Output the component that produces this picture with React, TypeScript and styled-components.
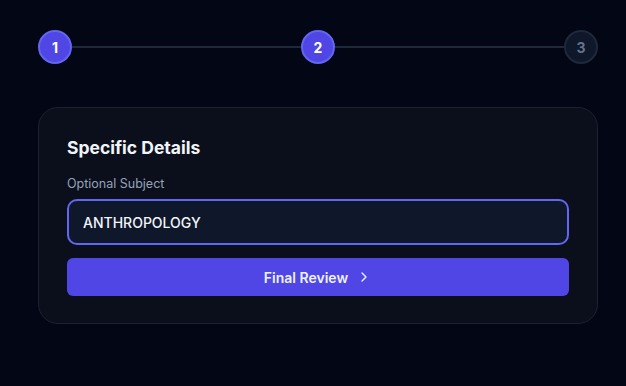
import styled, { createGlobalStyle } from 'styled-components';
import { ChevronRight } from 'lucide-react';

const GlobalStyle = createGlobalStyle`
    html, body {
        margin: 0;
        padding: 0;
        background: #030614;
        font-family: Inter, "Noto Sans", sans-serif;
    }
`;

const steps = [1, 2, 3];
const currentStep = 2;

const App: React.FC = () => {
    return (
        <>
            <GlobalStyle />
            <Page>
                <Stepper>
                    {steps.map((step, i) => (
                        <StepGroup key={step} $last={i === steps.length - 1}>
                            <StepCircle $active={step <= currentStep}>{step}</StepCircle>
                            {i < steps.length - 1 && <StepLine />}
                        </StepGroup>
                    ))}
                </Stepper>
                <Card>
                    <Title>Specific Details</Title>
                    <Label htmlFor="subject">Optional Subject</Label>
                    <Input id="subject" defaultValue="ANTHROPOLOGY" />
                    <Button>
                        Final Review
                        <ChevronRight size={16} strokeWidth={2} />
                    </Button>
                </Card>
            </Page>
        </>
    );
};

export default App;

const Page = styled.div`
    width: 560px;
    padding: 30px 0 0 38px;
    display: flex;
    flex-direction: column;
    gap: 43px;
`;

const Stepper = styled.div`
    display: flex;
    align-items: center;
`;

const StepGroup = styled.div<{ $last: boolean }>`
    display: flex;
    align-items: center;
    flex: ${({ $last }) => ($last ? '0 0 auto' : '1 1 0')};
`;

const StepCircle = styled.div<{ $active: boolean }>`
    box-sizing: border-box;
    width: 34px;
    height: 34px;
    border-radius: 50%;
    flex-shrink: 0;
    display: flex;
    align-items: center;
    justify-content: center;
    font-size: 14px;
    font-weight: 700;
    background: ${({ $active }) => ($active ? '#4f46e5' : '#0f172a')};
    border: 2px solid ${({ $active }) => ($active ? '#6366f1' : '#1e293b')};
    color: ${({ $active }) => ($active ? '#ffffff' : '#64748b')};
`;

const StepLine = styled.div`
    flex: 1;
    height: 2px;
    background: #1e293b;
`;

const Card = styled.div`
    box-sizing: border-box;
    width: 560px;
    padding: 28px 28px 27px;
    background: #0b0f1c;
    border: 1px solid #1c2233;
    border-radius: 20px;
    display: flex;
    flex-direction: column;
`;

const Title = styled.h2`
    margin: 0 0 15px;
    font-size: 17.5px;
    line-height: 24px;
    font-weight: 700;
    color: #f1f5f9;
`;

const Label = styled.label`
    font-size: 12.5px;
    line-height: 18px;
    color: #94a3b8;
    margin-bottom: 6px;
`;

const Input = styled.input`
    box-sizing: border-box;
    width: 100%;
    height: 46px;
    padding: 0 14px;
    background: #0f172a;
    border: 2px solid #6366f1;
    border-radius: 10px;
    outline: none;
    font-family: inherit;
    font-size: 14px;
    font-weight: 500;
    color: #f1f5f9;
    margin-bottom: 13px;
`;

const Button = styled.button`
    height: 38px;
    width: 100%;
    border: none;
    border-radius: 6px;
    background: #4f46e5;
    color: #eef2ff;
    font-family: inherit;
    font-size: 14px;
    font-weight: 600;
    display: flex;
    align-items: center;
    justify-content: center;
    gap: 8px;
    cursor: pointer;
`;
